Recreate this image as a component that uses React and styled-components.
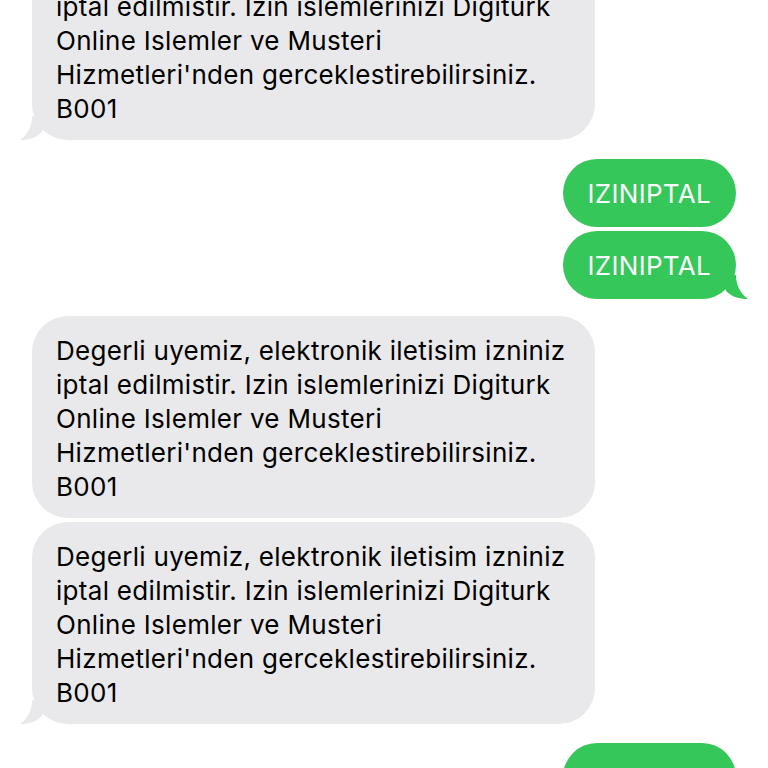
import React from "react";
import styled, { createGlobalStyle } from "styled-components";

const Global = createGlobalStyle`
  html, body { margin: 0; padding: 0; background: #ffffff; overflow: hidden; }
  body { font-family: "Inter", "Liberation Sans", sans-serif; -webkit-font-smoothing: antialiased; }
`;

const Screen = styled.div`
  width: 768px;
  height: 768px;
  overflow: hidden;
  background: #ffffff;
`;

const Thread = styled.div`
  display: flex;
  flex-direction: column;
  margin-top: -62px;
`;

const Group = styled.div`
  display: flex;
  flex-direction: column;
  align-items: ${(p) => (p.$me ? "flex-end" : "flex-start")};
  gap: 4px;
  padding: ${(p) => (p.$me ? "0 32px 0 0" : "0 0 0 32px")};
  margin-bottom: ${(p) => (p.$me ? "17px" : "19px")};
`;

const Bubble = styled.div`
  position: relative;
  box-sizing: border-box;
  background: ${(p) => (p.$me ? "#35c759" : "#e9e9eb")};
  color: ${(p) => (p.$me ? "#ffffff" : "#000000")};
  border-radius: ${(p) => (p.$me ? "34px" : "36px")};
  padding: ${(p) => (p.$me ? "18px 25px 16px" : "18px 24px 14px")};
  width: ${(p) => (p.$me ? "auto" : "563px")};
  font-size: 26px;
  line-height: 34px;
  letter-spacing: 0.3px;
  white-space: pre-line;
`;

const Tail = styled.svg`
  position: absolute;
  bottom: 0;
  width: 24px;
  height: 24px;
  ${(p) => (p.$me ? "right: -12px; transform: scaleX(-1);" : "left: -12px;")}
`;

const TailShape = ({ me }) => (
  <Tail $me={me} viewBox="0 0 24 24">
    <path
      d="M12 0 C12 10 8 18 0 24 C9 24 16 22 22 16 L24 0 Z"
      fill={me ? "#35c759" : "#e9e9eb"}
    />
  </Tail>
);

const longText =
  "Degerli uyemiz, elektronik iletisim izniniz\niptal edilmistir. Izin islemlerinizi Digiturk\nOnline Islemler ve Musteri\nHizmetleri'nden gerceklestirebilirsiniz.\nB001";

const groups = [
  { me: false, messages: [longText] },
  { me: true, messages: ["IZINIPTAL", "IZINIPTAL"] },
  { me: false, messages: [longText, longText] },
  { me: true, messages: ["IZINIPTAL"] },
];

export default function App() {
  return (
    <Screen>
      <Global />
      <Thread>
        {groups.map((g, gi) => (
          <Group key={gi} $me={g.me}>
            {g.messages.map((m, mi) => (
              <Bubble key={mi} $me={g.me}>
                {m}
                {mi === g.messages.length - 1 && <TailShape me={g.me} />}
              </Bubble>
            ))}
          </Group>
        ))}
      </Thread>
    </Screen>
  );
}
